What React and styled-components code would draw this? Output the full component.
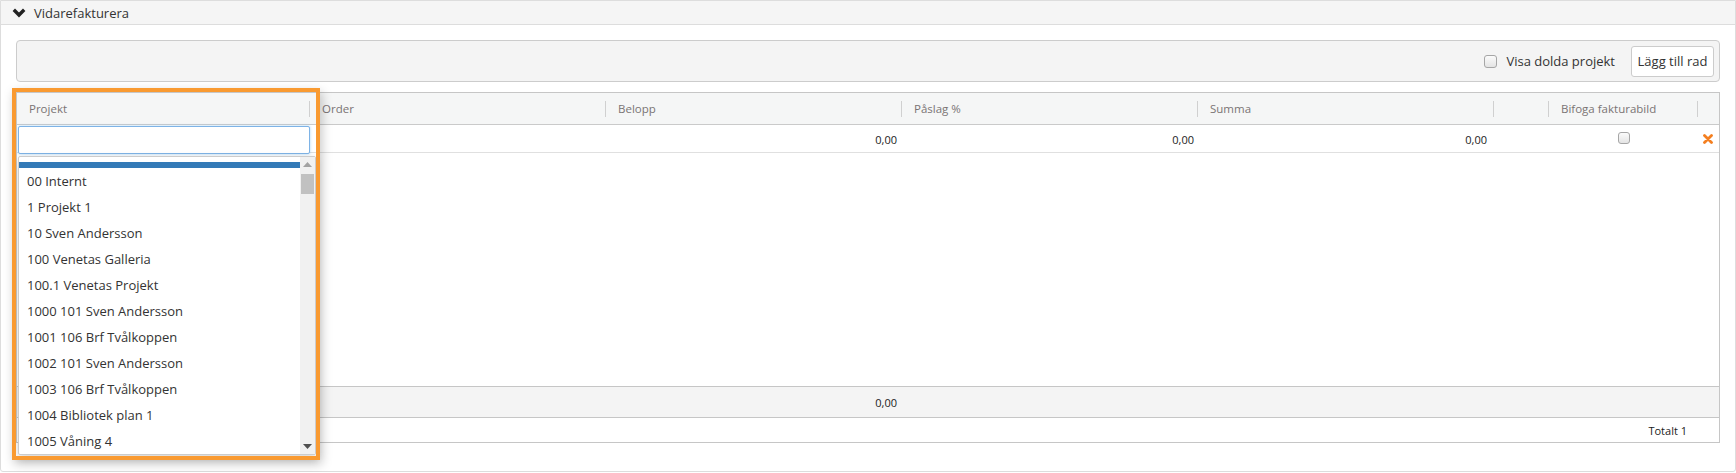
import React from "react";
import styled, { createGlobalStyle } from "styled-components";

const GlobalStyle = createGlobalStyle`
  html, body {
    margin: 0;
    padding: 0;
    background: #fff;
  }

  body {
    font-family: "Open Sans", "Noto Sans", Arial, sans-serif;
    color: #333;
  }

  * {
    box-sizing: border-box;
  }
`;

const Panel = styled.div`
  width: 1736px;
  border: 1px solid #ddd;
  border-radius: 0 0 3px 3px;
  background: #fff;
`;

const PanelHeader = styled.div`
  align-items: center;
  background: #f5f5f5;
  border-bottom: 1px solid #ddd;
  display: flex;
  gap: 8px;
  height: 24px;
  padding-left: 11px;
  font-size: 13px;
  color: #333;
`;

const PanelBody = styled.div`
  padding: 15px 15px 28px 15px;
`;

const Toolbar = styled.div`
  align-items: center;
  background: #f4f4f4;
  border: 1px solid #ccc;
  border-radius: 4px;
  display: flex;
  height: 42px;
  justify-content: flex-end;
  padding-right: 5px;
`;

const CheckLabel = styled.label`
  align-items: center;
  display: flex;
  font-size: 13px;
  gap: 9px;
  margin-right: 16px;
  color: #333;
`;

const CheckBox = styled.span`
  display: inline-block;
  width: ${(p) => p.size || 13}px;
  height: ${(p) => p.size || 13}px;
  border: 1px solid #a6a6a6;
  border-radius: 3px;
  background: linear-gradient(#fbfbfb, #e4e4e4);
  flex-shrink: 0;
`;

const Button = styled.button`
  background: #fff;
  border: 1px solid #ccc;
  border-radius: 3px;
  color: #333;
  font-family: inherit;
  font-size: 13px;
  height: 31px;
  padding: 0 5px;
  width: 83px;
`;

const TableWrap = styled.div`
  border: 1px solid #c6c6c6;
  margin-top: 10px;
  position: relative;
`;

const Row = styled.div`
  display: grid;
  grid-template-columns: 293px 296px 296px 296px 296px 55px 149px 1fr;
`;

const HeadRow = styled(Row)`
  background: #f5f6f6;
  border-bottom: 1px solid #cacaca;
  height: 32px;
`;

const HeadCell = styled.div`
  align-items: center;
  color: #7a7474;
  display: flex;
  font-size: 11.5px;
  padding-left: 12px;
  position: relative;

  &::after {
    content: "";
    display: ${(p) => (p.$last ? "none" : "block")};
    position: absolute;
    right: 0;
    top: 8px;
    height: 16px;
    width: 1px;
    background: #d0d0d0;
  }
`;

const DataRow = styled(Row)`
  border-bottom: 1px solid #e0e0e0;
  height: 28px;
`;

const DataCell = styled.div`
  display: flex;
  align-items: center;
  justify-content: ${(p) => p.$align || "flex-start"};
  font-size: 11px;
  color: #222;
  padding: 0 ${(p) => p.$pr ?? 0}px 0 ${(p) => p.$pl ?? 0}px;
`;

const SearchInput = styled.input`
  background: #fff;
  border: 1px solid #7eb3e6;
  border-radius: 2px;
  box-shadow: 0 0 3px rgba(102, 175, 233, 0.55);
  height: 28px;
  margin: 1px 0 -1px 1px;
  outline: none;
  position: relative;
  width: 294px;
  z-index: 1;
  align-self: flex-start;
`;

const CheckCell = styled(DataCell)`
  align-items: flex-start;
  justify-content: center;
  padding-top: 7px;
`;

const EmptyBody = styled.div`
  height: 233px;
`;

const SumRow = styled(Row)`
  background: #f4f4f4;
  border-top: 1px solid #c6c6c6;
  height: 31px;
`;

const FooterRow = styled.div`
  align-items: center;
  border-top: 1px solid #c6c6c6;
  display: flex;
  font-size: 11px;
  height: 25px;
  justify-content: flex-end;
  padding-right: 32px;
  color: #222;
`;

const Highlight = styled.div`
  position: absolute;
  left: -5px;
  top: -5px;
  width: 308px;
  height: 372px;
  border: 4px solid #f99a31;
  box-shadow: 2px 4px 10px rgba(0, 0, 0, 0.22);
  pointer-events: none;
  z-index: 3;
`;

const Dropdown = styled.div`
  position: absolute;
  left: 1px;
  top: 63px;
  width: 298px;
  height: 299px;
  background: #fff;
  border: 1px solid #ccc;
  border-radius: 2px;
  box-shadow: 0 3px 8px rgba(0, 0, 0, 0.18);
  display: flex;
  z-index: 2;
`;

const List = styled.div`
  flex: 1;
  overflow: hidden;
  padding-top: 5px;
`;

const ActiveStrip = styled.div`
  background: #337ab7;
  height: 6px;
`;

const Item = styled.div`
  align-items: center;
  display: flex;
  font-size: 13px;
  height: 26px;
  padding-left: 8px;
  color: #333;
  white-space: nowrap;
`;

const ScrollBar = styled.div`
  background: #f1f1f1;
  display: flex;
  flex-direction: column;
  align-items: center;
  width: 15px;
`;

const ScrollArrow = styled.div`
  height: 15px;
  width: 15px;
  display: flex;
  align-items: center;
  justify-content: center;
`;

const Thumb = styled.div`
  background: #c1c1c1;
  height: 20px;
  width: 13px;
  margin-top: 2px;
`;

const Spacer = styled.div`
  flex: 1;
`;

const Arrow = ({ up }) => (
  <svg width="9" height="5" viewBox="0 0 9 5">
    <path d={up ? "M0 5 L4.5 0 L9 5 Z" : "M0 0 L4.5 5 L9 0 Z"} fill={up ? "#a3a3a3" : "#505050"} />
  </svg>
);

const Chevron = () => (
  <svg width="14" height="10" viewBox="0 0 14 10">
    <path d="M1.8 1.8 L7 7 L12.2 1.8" fill="none" stroke="#222" strokeWidth="3.4" strokeLinejoin="miter" />
  </svg>
);

const RemoveIcon = () => (
  <svg width="10" height="10" viewBox="0 0 10 10">
    <path d="M1.5 1.5 L8.5 8.5 M8.5 1.5 L1.5 8.5" stroke="#f47f20" strokeWidth="2.8" strokeLinecap="round" />
  </svg>
);

const columns = ["Projekt", "Order", "Belopp", "Påslag %", "Summa", "", "Bifoga fakturabild", ""];

const projects = [
  "00 Internt",
  "1 Projekt 1",
  "10 Sven Andersson",
  "100 Venetas Galleria",
  "100.1 Venetas Projekt",
  "1000 101 Sven Andersson",
  "1001 106 Brf Tvålkoppen",
  "1002 101 Sven Andersson",
  "1003 106 Brf Tvålkoppen",
  "1004 Bibliotek plan 1",
  "1005 Våning 4",
];

export default function App() {
  return (
    <>
      <GlobalStyle />
      <Panel>
        <PanelHeader>
          <Chevron />
          <span>Vidarefakturera</span>
        </PanelHeader>
        <PanelBody>
          <Toolbar>
            <CheckLabel>
              <CheckBox />
              Visa dolda projekt
            </CheckLabel>
            <Button>Lägg till rad</Button>
          </Toolbar>

          <TableWrap>
            <HeadRow>
              {columns.map((c, i) => (
                <HeadCell key={i} $last={i === columns.length - 1}>
                  {c}
                </HeadCell>
              ))}
            </HeadRow>
            <DataRow>
              <DataCell>
                <SearchInput />
              </DataCell>
              <DataCell />
              <DataCell $align="flex-end" $pr={5}>0,00</DataCell>
              <DataCell $align="flex-end" $pr={4}>0,00</DataCell>
              <DataCell $align="flex-end" $pr={7}>0,00</DataCell>
              <DataCell />
              <CheckCell>
                <CheckBox size={12} />
              </CheckCell>
              <DataCell $pl={5}>
                <RemoveIcon />
              </DataCell>
            </DataRow>
            <EmptyBody />
            <SumRow>
              <DataCell />
              <DataCell />
              <DataCell $align="flex-end" $pr={5}>0,00</DataCell>
            </SumRow>
            <FooterRow>Totalt 1</FooterRow>

            <Dropdown>
              <List>
                <ActiveStrip />
                {projects.map((p) => (
                  <Item key={p}>{p}</Item>
                ))}
              </List>
              <ScrollBar>
                <ScrollArrow>
                  <Arrow up />
                </ScrollArrow>
                <Thumb />
                <Spacer />
                <ScrollArrow>
                  <Arrow />
                </ScrollArrow>
              </ScrollBar>
            </Dropdown>
            <Highlight />
          </TableWrap>
        </PanelBody>
      </Panel>
    </>
  );
}
